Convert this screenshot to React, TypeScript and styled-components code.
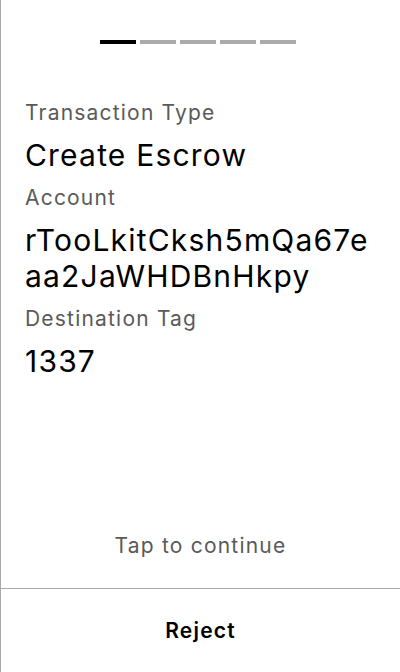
import React from "react";
import styled, { createGlobalStyle } from "styled-components";

const Global = createGlobalStyle`
  html, body { margin: 0; padding: 0; background: #fff; }
  body { font-family: Inter, "Noto Sans", "Liberation Sans", sans-serif; }
  * { box-sizing: border-box; }
`;

const Screen = styled.div`
  width: 400px;
  height: 672px;
  border-left: 1px solid #aaaaaa;
  display: flex;
  flex-direction: column;
  background: #fff;
`;

const Main = styled.main`
  flex: 1;
  display: flex;
  flex-direction: column;
  padding: 40px 24px 30px 24px;
  cursor: pointer;
`;

const Progress = styled.div`
  display: flex;
  justify-content: center;
  gap: 4px;
  padding-right: 5px;
`;

const Step = styled.div<{ $active?: boolean }>`
  width: 36px;
  height: 4px;
  background: ${(p) => (p.$active ? "#000" : "#aaaaaa")};
`;

const Fields = styled.dl`
  margin: 57px 0 0 0;
  display: flex;
  flex-direction: column;
  gap: 12px;
`;

const Label = styled.dt`
  font-size: 21px;
  line-height: 24px;
  letter-spacing: 1.2px;
  color: #5a5a5a;
  margin: 0;

  &:not(:first-child) {
    margin-top: 1px;
  }
`;

const Value = styled.dd`
  font-size: 30px;
  line-height: 36px;
  letter-spacing: 1.2px;
  color: #000;
  margin: 0;
  word-break: break-all;
`;

const Hint = styled.p`
  margin: auto 0 0 0;
  text-align: center;
  font-size: 21px;
  line-height: 24px;
  letter-spacing: 1.2px;
  color: #5a5a5a;
`;

const Footer = styled.footer`
  height: 84px;
  border-top: 1px solid #aaaaaa;
  display: flex;
  align-items: center;
  justify-content: center;
`;

const RejectButton = styled.button`
  border: none;
  background: none;
  font-family: inherit;
  font-size: 21px;
  line-height: 24px;
  letter-spacing: 1.2px;
  font-weight: 600;
  color: #000;
  padding: 0;
  cursor: pointer;
`;

const fields = [
  { label: "Transaction Type", value: "Create Escrow" },
  { label: "Account", value: "rTooLkitCksh5mQa67eaa2JaWHDBnHkpy" },
  { label: "Destination Tag", value: "1337" },
];

export default function App() {
  return (
    <>
      <Global />
      <Screen>
        <Main>
          <Progress>
            {[0, 1, 2, 3, 4].map((i) => (
              <Step key={i} $active={i === 0} />
            ))}
          </Progress>
          <Fields>
            {fields.map((f) => (
              <React.Fragment key={f.label}>
                <Label>{f.label}</Label>
                <Value>{f.value}</Value>
              </React.Fragment>
            ))}
          </Fields>
          <Hint>Tap to continue</Hint>
        </Main>
        <Footer>
          <RejectButton>Reject</RejectButton>
        </Footer>
      </Screen>
    </>
  );
}
